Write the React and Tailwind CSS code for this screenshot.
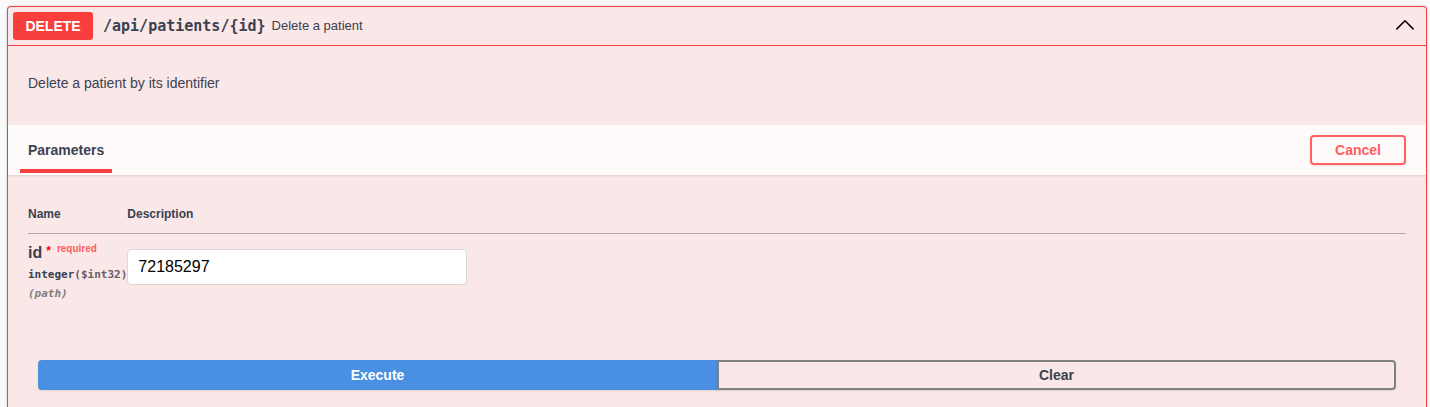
import { useState } from "react";

const actionButton =
  "h-[30px] border-2 text-sm font-bold shadow-[0_1px_2px_rgba(0,0,0,0.1)]";

function OperationHeader() {
  return (
    <header className="border-b border-[#f93e3e]">
      <button type="button" className="flex h-[38px] w-full items-center px-[5px] text-left">
        <span className="mr-2.5 flex h-7 w-20 shrink-0 items-center justify-center rounded-[3px] bg-[#f93e3e] text-sm font-bold text-white">
          DELETE
        </span>
        <span className="mr-1.5 font-['DejaVu_Sans_Mono',monospace] text-[15px] font-bold">
          /api/patients/&#123;id&#125;
        </span>
        <span className="text-[13px]">Delete a patient</span>
        <svg className="mr-1.5 ml-auto h-5 w-5 text-black" viewBox="0 0 20 20" fill="none" aria-hidden="true">
          <path d="M1.9 12.9 10 4.8l8.1 8.1" stroke="currentColor" strokeWidth="1.5" strokeLinecap="round" strokeLinejoin="round" />
        </svg>
      </button>
    </header>
  );
}

function ParametersTable({ value, onChange }) {
  return (
    <table className="w-full border-collapse text-left">
      <thead>
        <tr className="border-b border-[#b8a8ab] text-xs">
          <th scope="col" className="h-10 w-[99px] pt-0.5 font-bold">Name</th>
          <th scope="col" className="h-10 pt-0.5 font-bold">Description</th>
        </tr>
      </thead>
      <tbody>
        <tr className="align-top">
          <td className="pt-[9px]">
            <label htmlFor="param-id" className="flex items-start whitespace-nowrap leading-5">
              <span className="text-base font-bold leading-5">id</span>
              <span className="ml-1 text-xs font-bold leading-4 text-[#ff0000]">*</span>
              <span className="ml-1.5 text-[10px] font-bold leading-3 text-[#ff5f60]">required</span>
            </label>
            <div className="pt-0.5 font-['DejaVu_Sans_Mono',monospace] text-[11px] font-bold leading-5">
              integer<span className="text-[#696065]">($int32)</span>
            </div>
            <div className="font-['DejaVu_Sans_Mono',monospace] text-[11px] font-bold italic leading-[18px] text-[#808080]">
              (path)
            </div>
          </td>
          <td className="pt-[15px]">
            <input
              id="param-id"
              type="text"
              value={value}
              onChange={(event) => onChange(event.target.value)}
              className="block h-9 w-full max-w-[340px] rounded border border-[#d9d9d9] bg-white px-2.5 text-base text-black"
            />
          </td>
        </tr>
      </tbody>
    </table>
  );
}

export default function App() {
  const [id, setId] = useState("72185297");

  return (
    <main className="flex min-h-screen flex-col bg-[#fafafa] pt-1.5 pr-[3px] pl-[7px] font-['Liberation_Sans',Arial,sans-serif] text-[#3b4151]">
      <section className="flex-1 rounded-t border border-b-0 border-[#f93e3e] bg-[#fae7e7] shadow-[0_0_3px_rgba(0,0,0,0.19)]">
        <OperationHeader />
        <p className="px-5 pt-7 pb-8 text-sm leading-[19px]">Delete a patient by its identifier</p>

        <div className="flex h-[50px] items-center justify-between bg-[#fefaf9] pr-5 pl-3 shadow-[0_1px_2px_rgba(0,0,0,0.1)]">
          <div className="flex h-full flex-col justify-end pb-0.5">
            <h4 className="px-2 pb-2 text-sm font-bold leading-[22px]">Parameters</h4>
            <span className="h-1 bg-[#f93e3e]" />
          </div>
          <button type="button" className={`${actionButton} w-24 rounded border-[#ff6060] text-[#ff6060]`}>
            Cancel
          </button>
        </div>

        <div className="px-5 pt-[18px]">
          <ParametersTable value={id} onChange={setId} />
        </div>

        <div className="grid grid-cols-2 px-[30px] pt-[57px]">
          <button type="button" className={`${actionButton} rounded-l border-[#4990e2] bg-[#4990e2] text-white`}>
            Execute
          </button>
          <button
            type="button"
            onClick={() => setId("")}
            className={`${actionButton} rounded-r border-[#808080]`}
          >
            Clear
          </button>
        </div>
      </section>
    </main>
  );
}
